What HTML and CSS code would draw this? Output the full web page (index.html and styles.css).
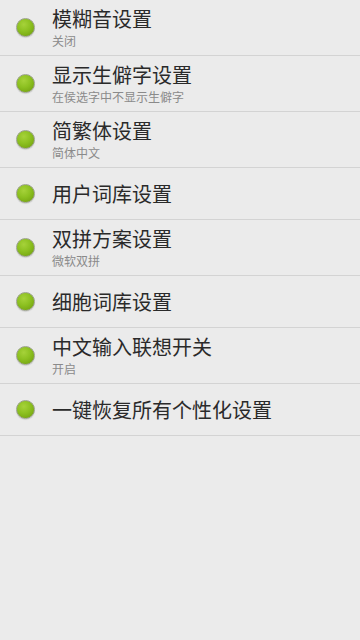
FILE: index.html
```html
<!DOCTYPE html>
<html lang="zh-CN">
<head>
<meta charset="utf-8">
<link rel="stylesheet" href="styles.css">
</head>
<body>
<ul class="list">
  <li class="row"><span class="dot"></span><div class="text"><div class="title">模糊音设置</div><div class="sub">关闭</div></div></li>
  <li class="row"><span class="dot"></span><div class="text"><div class="title">显示生僻字设置</div><div class="sub">在侯选字中不显示生僻字</div></div></li>
  <li class="row"><span class="dot"></span><div class="text"><div class="title">简繁体设置</div><div class="sub">简体中文</div></div></li>
  <li class="row single"><span class="dot"></span><div class="text"><div class="title">用户词库设置</div></div></li>
  <li class="row"><span class="dot"></span><div class="text"><div class="title">双拼方案设置</div><div class="sub">微软双拼</div></div></li>
  <li class="row single"><span class="dot"></span><div class="text"><div class="title">细胞词库设置</div></div></li>
  <li class="row"><span class="dot"></span><div class="text"><div class="title">中文输入联想开关</div><div class="sub">开启</div></div></li>
  <li class="row single"><span class="dot"></span><div class="text"><div class="title">一键恢复所有个性化设置</div></div></li>
</ul>
</body>
</html>
```
FILE: styles.css
```css
html, body {
  margin: 0;
  padding: 0;
  background: #ebebeb;
  width: 360px;
  height: 640px;
  font-family: "Noto Sans CJK SC", "Noto Sans", sans-serif;
}
.list {
  list-style: none;
  margin: 0;
  padding: 0;
}
.row {
  display: flex;
  align-items: center;
  min-height: 55px;
  border-bottom: 1px solid #d3d3d3;
  box-sizing: content-box;
}
.row.single {
  min-height: 51px;
}
.dot {
  flex: none;
  width: 17px;
  height: 17px;
  margin-left: 16px;
  margin-right: 17px;
  border-radius: 50%;
  background: radial-gradient(circle at 40% 32%, #a6d23a 0%, #8cc020 45%, #6c9a0c 100%);
  border: 1px solid #9aa08a;
  box-shadow: 0 1px 1px rgba(0,0,0,0.12);
}
.text {
  display: flex;
  flex-direction: column;
}
.title {
  font-size: 20px;
  line-height: 24px;
  color: #2a2a2a;
}
.sub {
  font-size: 12px;
  line-height: 16px;
  color: #8a8a8a;
  margin-top: 2px;
}
```
